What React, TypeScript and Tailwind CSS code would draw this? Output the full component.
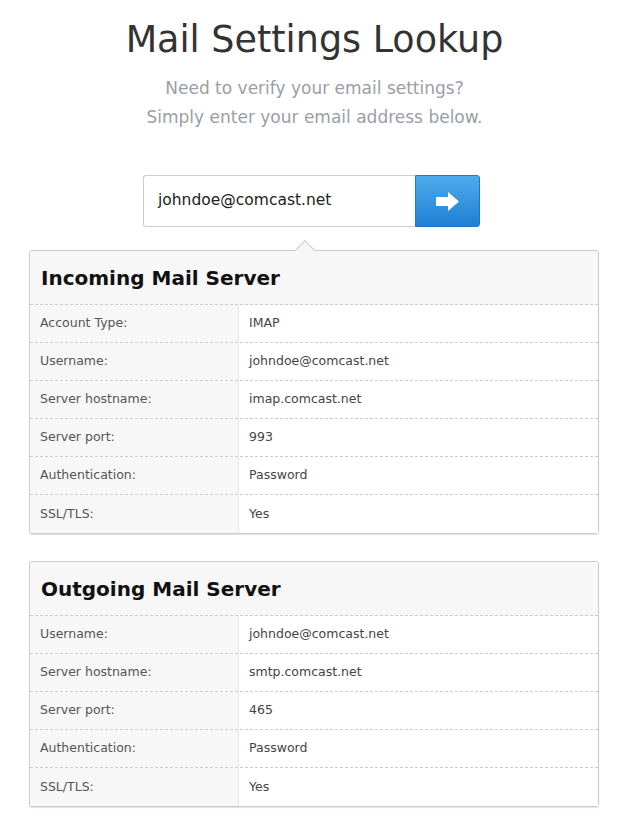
const incoming = [
  ['Account Type:', 'IMAP'],
  ['Username:', 'johndoe@comcast.net'],
  ['Server hostname:', 'imap.comcast.net'],
  ['Server port:', '993'],
  ['Authentication:', 'Password'],
  ['SSL/TLS:', 'Yes'],
]

const outgoing = [
  ['Username:', 'johndoe@comcast.net'],
  ['Server hostname:', 'smtp.comcast.net'],
  ['Server port:', '465'],
  ['Authentication:', 'Password'],
  ['SSL/TLS:', 'Yes'],
]

const ServerCard = ({ title, rows, caret = false }: { title: string; rows: string[][]; caret?: boolean }) => (
  <div className="relative ml-[29px] mr-[30px] rounded-[3px] border border-[#cccccc] shadow-[0_1px_1px_rgba(0,0,0,0.12)]">
    {caret && (
      <div className="absolute left-[268px] top-[-8px] h-[14px] w-[14px] rotate-45 border-l border-t border-[#cccccc] bg-[#f7f7f7]" />
    )}
    {/* Header */}
    <div className="relative flex h-[54px] items-center rounded-t-[3px] border-b border-dashed border-[#cccccc] bg-[#f7f7f7] px-[11px]">
      <h2 className="text-[20px] font-bold text-[#111]">{title}</h2>
    </div>
    {/* Rows */}
    {rows.map(([label, value], i) => (
      <div
        key={label}
        className={`flex h-[38px] text-[12.5px] ${i < rows.length - 1 ? 'border-b border-dashed border-[#cccccc]' : ''}`}
      >
        <div className={`flex w-[208px] items-center bg-[#f7f7f7] px-[10px] text-[#555] ${i === rows.length - 1 ? 'rounded-bl-[3px]' : ''}`}>
          {label}
        </div>
        <div className="flex flex-1 items-center border-l border-[#e5e5e5] bg-white px-[10px] text-[#444]">
          {value}
        </div>
      </div>
    ))}
  </div>
)

export default function App() {
  return (
    <div className="min-h-screen bg-white pb-8 font-['DejaVu_Sans',sans-serif]">
      <h1 className="pt-[18px] text-center text-[36.5px] leading-[44px] text-[#333]">Mail Settings Lookup</h1>
      <p className="mt-[12px] text-center text-[17px] leading-[29px] text-[#9a9ea6]">
        Need to verify your email settings?
        <br />
        Simply enter your email address below.
      </p>

      {/* Search */}
      <div className="mt-[43px] flex justify-center">
        <div className="ml-[-6px] flex h-[52px]">
          <div className="flex w-[272px] items-center rounded-l-[3px] border border-r-0 border-[#cccccc] bg-white px-[14px] text-[15.5px] text-[#222]">
            johndoe@comcast.net
          </div>
          <button
            type="button"
            className="flex w-[65px] items-center justify-center rounded-r-[3px] border border-[#2277c4] bg-gradient-to-b from-[#4dabec] to-[#1e80d3]"
          >
            <svg width="23" height="19" viewBox="0 0 23 19">
              <path d="M0 5 H12 V0 L23 9.5 L12 19 V14 H0 Z" fill="#ffffff" />
            </svg>
          </button>
        </div>
      </div>

      <div className="mt-[23px] flex flex-col gap-[27px]">
        <ServerCard title="Incoming Mail Server" rows={incoming} caret />
        <ServerCard title="Outgoing Mail Server" rows={outgoing} />
      </div>
    </div>
  )
}
